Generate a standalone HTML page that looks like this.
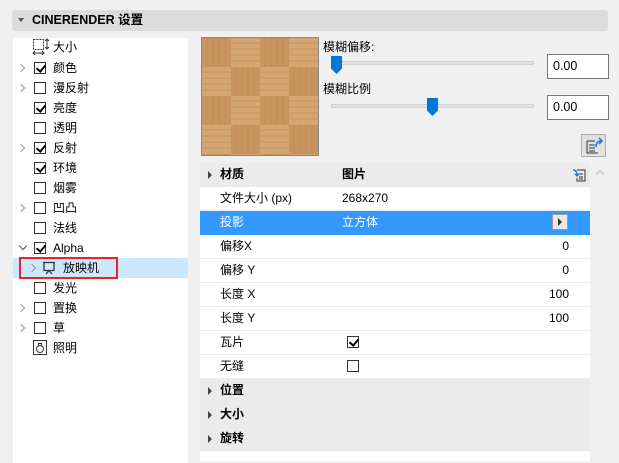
<!DOCTYPE html>
<html><head><meta charset="utf-8"><style>
*{margin:0;padding:0;box-sizing:border-box}
body{width:619px;height:463px;background:#f0f0f0;font-family:"Liberation Sans","Noto Sans CJK SC",sans-serif;font-size:12px;color:#000;position:relative;overflow:hidden}
.a{position:absolute}
.hdr{left:12px;top:10px;width:596px;height:21px;background:#dcdcdc;border-radius:3px;font-weight:bold;font-size:12.5px;line-height:21px;padding-left:20px}
.left{left:13px;top:38px;width:175px;height:425px;background:#fff}
.li{position:absolute;left:0;width:175px;height:20px;line-height:20px}
.cb{position:absolute;left:21px;top:4px;width:12px;height:12px;border:1px solid #333;background:#fff}
.cb.c::after{content:"";position:absolute;left:3px;top:0px;width:4px;height:7px;border:solid #000;border-width:0 2px 2px 0;transform:rotate(40deg)}
.lt{position:absolute;left:40px}
.chev{position:absolute;left:5px;top:4px;width:6px;height:6px;border:solid #999;border-width:1.5px 1.5px 0 0;transform:rotate(45deg)}
.row{position:absolute;left:200px;width:390px;height:24px;line-height:23px;background:#fff;border-bottom:1px solid #ececec}
.row .l{position:absolute;left:20px}
.row .v{position:absolute;left:142px}
.row .r{position:absolute;right:21px}
.g{background:#ebebeb;font-weight:bold}
.tri{position:absolute;left:8px;top:8px;width:0;height:0;border-left:4px solid #444;border-top:4px solid transparent;border-bottom:4px solid transparent}
.inp{width:62px;height:25px;border:1px solid #777;background:#fff;line-height:23px;padding-left:5px;font-size:12.5px}
.track{height:4px;background:#e3e3e3;border:1px solid #d0d0d0}
.thumb{width:11px;height:18px;background:#0078d7;clip-path:polygon(0 0,100% 0,100% 70%,50% 100%,0 70%)}
</style></head><body>
<div class="a hdr">CINERENDER 设置</div>
<div class="a" style="left:18px;top:18px;border-top:4px solid #555;border-left:3.5px solid transparent;border-right:3.5px solid transparent"></div>
<div class="a left">
 <div class="li" style="top:-1px"><svg class="a" style="left:19px;top:1px" width="18" height="18"><rect x="1.5" y="1.5" width="10" height="10" fill="none" stroke="#333" stroke-dasharray="2 1"/><path d="M15 1v10M13 3l2-2 2 2M13 9l2 2 2-2M1 15h11M3 13l-2 2 2 2M10 13l2 2-2 2" stroke="#333" fill="none"/></svg><span class="lt">大小</span></div>
 <div class="li" style="top:20px"><span class="chev" style="top:7px"></span><span class="cb c"></span><span class="lt">颜色</span></div>
 <div class="li" style="top:40px"><span class="chev" style="top:7px"></span><span class="cb"></span><span class="lt">漫反射</span></div>
 <div class="li" style="top:60px"><span class="cb c"></span><span class="lt">亮度</span></div>
 <div class="li" style="top:80px"><span class="cb"></span><span class="lt">透明</span></div>
 <div class="li" style="top:100px"><span class="chev" style="top:7px"></span><span class="cb c"></span><span class="lt">反射</span></div>
 <div class="li" style="top:120px"><span class="cb c"></span><span class="lt">环境</span></div>
 <div class="li" style="top:140px"><span class="cb"></span><span class="lt">烟雾</span></div>
 <div class="li" style="top:160px"><span class="chev" style="top:7px"></span><span class="cb"></span><span class="lt">凹凸</span></div>
 <div class="li" style="top:180px"><span class="cb"></span><span class="lt">法线</span></div>
 <div class="li" style="top:200px"><span class="chev" style="top:5px;left:7px;border-color:#555;transform:rotate(135deg)"></span><span class="cb c"></span><span class="lt">Alpha</span></div>
 <div class="li" style="top:220px;background:#cce8ff"><span class="chev" style="top:7px;left:16px"></span><svg class="a" style="left:29px;top:3px" width="14" height="14"><path d="M1 1.5h12M2 1.5v8h10v-8M4 13l3-3.5 3 3.5" stroke="#333" fill="none" stroke-width="1.3"/></svg><span class="lt" style="left:50px">放映机</span></div>
 <div class="li" style="top:240px"><span class="cb"></span><span class="lt">发光</span></div>
 <div class="li" style="top:260px"><span class="chev" style="top:7px"></span><span class="cb"></span><span class="lt">置换</span></div>
 <div class="li" style="top:280px"><span class="chev" style="top:7px"></span><span class="cb"></span><span class="lt">草</span></div>
 <div class="li" style="top:300px"><svg class="a" style="left:20px;top:2px" width="14" height="16"><rect x="0.5" y="0.5" width="13" height="14" fill="none" stroke="#333"/><circle cx="7" cy="9" r="3.5" fill="none" stroke="#333"/><path d="M5.5 5.5v-2h3v2" stroke="#333" fill="none"/></svg><span class="lt">照明</span></div>
</div>
<div class="a" style="left:19px;top:257px;width:99px;height:22px;border:2px solid #e8232a"></div>

<svg class="a" style="left:201px;top:37px;border:1px solid #888" width="118" height="119">
<defs><pattern id="p" width="58" height="58" patternUnits="userSpaceOnUse" x="0" y="0">
<rect width="58" height="58" fill="#d4a672"/>
<g fill="#c89560"><rect x="0" y="0" width="29" height="29"/><rect x="29" y="29" width="29" height="29"/></g>
<g stroke="#b88553" stroke-width="1" opacity=".6"><path d="M5 0v29M11 0v29M17 0v29M23 0v29M34 29v29M40 29v29M46 29v29M52 29v29M29 5h29M29 11h29M29 17h29M29 23h29M0 34h29M0 40h29M0 46h29M0 52h29"/></g>
</pattern></defs>
<rect width="118" height="119" fill="url(#p)"/></svg>

<div class="a" style="left:323px;top:38px;font-size:12px">模糊偏移:</div>
<div class="a track" style="left:331px;top:61px;width:203px"></div>
<div class="a thumb" style="left:331px;top:56px"></div>
<div class="a inp" style="left:547px;top:54px">0.00</div>
<div class="a" style="left:323px;top:80px">模糊比例</div>
<div class="a track" style="left:331px;top:104px;width:203px"></div>
<div class="a thumb" style="left:427px;top:98px"></div>
<div class="a inp" style="left:547px;top:95px">0.00</div>
<div class="a" style="left:581px;top:134px;width:25px;height:23px;background:#e1e1e1;border:1px solid #adadad"><svg width="23" height="21"><path d="M5 6h8M5 9v9h11M5 6v3M7 10h6M7 13h6M7 16h6" stroke="#333" fill="none"/><path d="M14 12c0-4 2-6 5-6M17 3l3 3-3 3" stroke="#1e7be0" stroke-width="1.6" fill="none"/></svg></div>

<div class="row g" style="top:163px"><span class="tri"></span><span class="l">材质</span><span class="v">图片</span>
<svg class="a" style="left:372px;top:5px" width="14" height="14"><path d="M5 2h8v11H5v-3M7 6h4M7 9h4M7 11h4" stroke="#333" fill="none"/><path d="M1 2c3 0 4 2 4 5M3 6l2 2 2-2" stroke="#1e7be0" stroke-width="1.5" fill="none"/></svg></div>
<div class="row" style="top:187px"><span class="l">文件大小 (px)</span><span class="v">268x270</span></div>
<div class="row" style="top:211px;background:#3399ff;color:#fff;border-color:#3399ff"><span class="l">投影</span><span class="v">立方体</span><span class="a" style="left:352px;top:3px;width:16px;height:16px;background:#e9e9e9;border:1px solid #999"><span class="a" style="left:5px;top:3px;border-left:4px solid #333;border-top:4px solid transparent;border-bottom:4px solid transparent"></span></span></div>
<div class="row" style="top:235px"><span class="l">偏移X</span><span class="r">0</span></div>
<div class="row" style="top:259px"><span class="l">偏移 Y</span><span class="r">0</span></div>
<div class="row" style="top:283px"><span class="l">长度 X</span><span class="r">100</span></div>
<div class="row" style="top:307px"><span class="l">长度 Y</span><span class="r">100</span></div>
<div class="row" style="top:331px"><span class="l">瓦片</span><span class="cb c" style="left:147px;top:5px"></span></div>
<div class="row" style="top:355px"><span class="l">无缝</span><span class="cb" style="left:147px;top:5px"></span></div>
<div class="row g" style="top:379px"><span class="tri"></span><span class="l">位置</span></div>
<div class="row g" style="top:403px"><span class="tri"></span><span class="l">大小</span></div>
<div class="row g" style="top:427px"><span class="tri"></span><span class="l">旋转</span></div>
<div class="row" style="top:451px;height:12px"></div>
<div class="a" style="left:597px;top:171px;width:6px;height:6px;border:solid #bbb;border-width:1.5px 0 0 1.5px;transform:rotate(45deg)"></div>
</body></html>
